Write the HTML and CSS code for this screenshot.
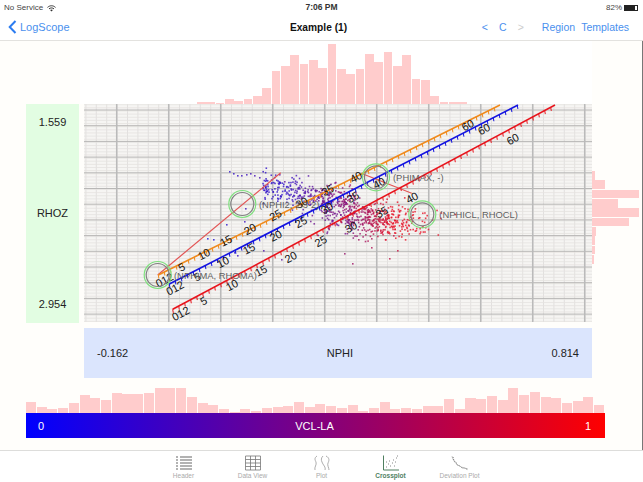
FILE: index.html
```html
<!DOCTYPE html>
<html lang="en">
<head>
  <meta charset="UTF-8" />
  <title>LogScope Crossplot</title>
  <link rel="stylesheet" href="styles.css">
</head>
<body>
  <div class="app">
    <div class="status-bar">
      <div class="status-left">No Service
        <svg class="wifi" width="9" height="7" viewBox="0 0 9 7"><path d="M0.5 2.4C3 0.2 6 0.2 8.5 2.4M2 3.9C3.6 2.6 5.4 2.6 7 3.9" fill="none" stroke="#333" stroke-width="1"/><path d="M4.5 6.6L3.1 5.1C4 4.4 5 4.4 5.9 5.1Z" fill="#333"/></svg>
      </div>
      <div class="status-time">7:06 PM</div>
      <div class="status-right">82%
        <span class="battery"><span class="battery-level"></span></span>
      </div>
    </div>

    <div class="nav-bar">
      <div class="nav-left">
        <svg width="9" height="14" viewBox="0 0 9 14"><path d="M7.5 1L1.7 7L7.5 13" fill="none" stroke="#2c7cf0" stroke-width="2"/></svg>
        <span>LogScope</span>
      </div>
      <div class="nav-title">Example (1)</div>
      <div class="nav-right">
        <span class="nav-step">&lt;</span>
        <span class="nav-step">C</span>
        <span class="nav-step off">&gt;</span>
        <span class="nav-link">Region</span>
        <span class="nav-link">Templates</span>
      </div>
    </div>

    <div class="main">
      <div class="top-hist" id="topHist"></div>

      <div class="plot-row">
        <div class="y-axis">
          <span>1.559</span>
          <span>RHOZ</span>
          <span>2.954</span>
        </div>
        <svg class="plot" id="plot" width="508" height="218" viewBox="84 104 508 218"></svg>
        <div class="right-hist" id="rightHist"></div>
      </div>

      <div class="x-axis">
        <span>-0.162</span>
        <span>NPHI</span>
        <span>0.814</span>
      </div>

      <div class="bottom-hist" id="bottomHist"></div>
      <div class="color-bar">
        <span>0</span>
        <span>VCL-LA</span>
        <span>1</span>
      </div>
    </div>

    <div class="tab-bar">
      <div class="tab">
        <svg width="18" height="16" viewBox="0 0 18 16">
          <path d="M1 2H3M5 2H17M1 5H3M5 5H17M1 8H3M5 8H17M1 11H3M5 11H17M1 14H3M5 14H17" stroke="#666" stroke-width="1.2"/>
        </svg>
        <span>Header</span>
      </div>
      <div class="tab">
        <svg width="18" height="16" viewBox="0 0 18 16">
          <path d="M1.5 1H16.5V15H1.5ZM1.5 4.5H16.5M1.5 8H16.5M1.5 11.5H16.5M6.5 1V15M11.5 1V15" fill="none" stroke="#777" stroke-width="0.8"/>
        </svg>
        <span>Data View</span>
      </div>
      <div class="tab">
        <svg width="18" height="16" viewBox="0 0 18 16">
          <path d="M4 1C1 3 2 5 3 7C4 10 1 12 2 15M10 1C8 3 8 5 9 7C10 10 13 12 12 15M13 1C17 3 16 6 15 8C14 10 16 13 16 15" fill="none" stroke="#999" stroke-width="0.8"/>
        </svg>
        <span>Plot</span>
      </div>
      <div class="tab active">
        <svg width="18" height="16" viewBox="0 0 18 16">
          <path d="M1.5 0.5V15H17" fill="none" stroke="#4f7f5f" stroke-width="1"/>
          <path d="M4 12h1M6 9h1M8 11h1M7 6h1M10 8h1M11 5h1M13 7h1M14 3h1M15 1h1M12 11h1M4 7h1" stroke="#888" stroke-width="1"/>
        </svg>
        <span>Crossplot</span>
      </div>
      <div class="tab">
        <svg width="18" height="16" viewBox="0 0 18 16">
          <path d="M1 1C2 7 7 12 17 14" fill="none" stroke="#bbb" stroke-width="0.8"/>
          <path d="M2 2L3 6L5 7L6 10L9 11L11 13L14 13L17 15" fill="none" stroke="#777" stroke-width="1" stroke-dasharray="1 1"/>
        </svg>
        <span>Deviation Plot</span>
      </div>
    </div>
  </div>

  <script src="main.js"></script>
</body>
</html>
```

FILE: styles.css
```css
* {
  box-sizing: border-box;
}
body {
  margin: 0;
  font-family: "Liberation Sans", Arial, sans-serif;
  background-color: #fffefb;
  color: #222;
}
.app {
  width: 643px;
  height: 482px;
  display: flex;
  flex-direction: column;
  overflow: hidden;
}
.status-bar {
  height: 14px;
  padding: 2px 4px 0;
  display: grid;
  grid-template-columns: 1fr auto 1fr;
  font-size: 8px;
  line-height: 10px;
  background-color: #fff;
  color: #444;
}
.status-left {
  display: flex;
  align-items: center;
  gap: 4px;
}
.status-time {
  font-size: 8.5px;
  font-weight: bold;
  color: #333;
}
.status-right {
  display: flex;
  justify-content: flex-end;
  align-items: center;
  gap: 2px;
  padding-right: 1px;
}
.battery {
  width: 14px;
  height: 6px;
  border: 1px solid #222;
  display: block;
}
.battery-level {
  display: block;
  width: 10px;
  height: 4px;
  background-color: #222;
}
.nav-bar {
  height: 27px;
  padding: 0 14px 0 8px;
  display: grid;
  grid-template-columns: 1fr auto 1fr;
  align-items: center;
  background-color: #fff;
  border-bottom: 1px solid #e3e2df;
  font-size: 10.5px;
}
.nav-left {
  display: flex;
  align-items: center;
  gap: 3px;
  font-size: 11px;
  color: #4a90ee;
}
.nav-title {
  font-size: 10.2px;
  font-weight: bold;
  color: #111;
}
.nav-right {
  display: flex;
  justify-content: flex-end;
  color: #4a90ee;
}
.nav-step {
  width: 18px;
  text-align: center;
}
.nav-step.off {
  color: #ccc;
  margin-right: 6px;
}
.nav-link {
  margin-left: 6px;
}
.main {
  flex: 1;
  position: relative;
  border-right: 1px solid #777;
}
.top-hist {
  height: 63px;
  margin-left: 80px;
  width: 512px;
  padding: 0 0 0 117px;
  display: flex;
  align-items: flex-end;
  background-color: #fff;
}
.top-hist .bar {
  width: 9.33px;
  padding-right: 0.7px;
  background-clip: content-box;
  background-color: #ffcccc;
}
.plot-row {
  height: 219px;
  padding-left: 26px;
  display: flex;
}
.y-axis {
  width: 53px;
  margin-right: 5px;
  padding: 12px 0 13px;
  display: flex;
  flex-direction: column;
  justify-content: space-between;
  align-items: center;
  background-color: #e2fde2;
  font-size: 11px;
}
.plot {
  display: block;
  background-color: #f6f5f3;
}
.right-hist {
  padding-top: 67px;
  flex: 1;
}
.right-hist .bar {
  height: 9.33px;
  padding-bottom: 0.7px;
  background-clip: content-box;
  background-color: #ffcccc;
}
.x-axis {
  height: 50px;
  margin: 5px 0 0 84px;
  width: 508px;
  padding: 0 13px;
  display: flex;
  justify-content: space-between;
  align-items: center;
  background-color: #dbe5fd;
  font-size: 11px;
}
.bottom-hist {
  height: 28px;
  margin: 7px 0 0 26px;
  width: 579px;
  display: flex;
  align-items: flex-end;
}
.bottom-hist .bar {
  flex: 1;
  padding-right: 0.7px;
  background-clip: content-box;
  background-color: #ffcccc;
}
.color-bar {
  height: 25px;
  margin-left: 26px;
  width: 579px;
  padding: 0 14px 0 12px;
  display: flex;
  justify-content: space-between;
  align-items: center;
  background: linear-gradient(to right, #0000ff, #ff0000);
  color: #fff;
  font-size: 11px;
}
.tab-bar {
  height: 32px;
  display: flex;
  justify-content: center;
  background-color: #fff;
  border-top: 1px solid #dddddb;
}
.tab {
  width: 69px;
  padding-top: 4px;
  display: flex;
  flex-direction: column;
  align-items: center;
  gap: 1px;
  font-size: 6.5px;
  line-height: 8px;
  color: #aaa;
}
.tab svg {
  display: block;
}
.tab.active {
  color: #4f7f5f;
  font-weight: bold;
}
```

FILE: main.js
```js
const SVG_NS = 'http://www.w3.org/2000/svg';
const plot = document.getElementById('plot');

// histogram heights read off the chart, left to right
const topBars = [2, 2, 1.3, 5.3, 3.3, 4.7, 8, 16, 33, 38.3, 48.7, 40.3, 43.7, 35.7, 60.3, 35.3, 29.7, 35.3, 50, 42, 52.3, 38.3, 48.7, 25.3, 23.7, 8.3, 2, 2, 2];
const bottomBars = [11, 6, 3.7, 5.3, 9.7, 18, 15, 12.7, 19.7, 18.7, 18.7, 20, 25.3, 25.3, 25.3, 15.7, 9.7, 7.7, 4, 1.3, 4, 2.3, 5, 5.7, 7, 11, 6, 9.3, 7.3, 5.3, 7.7, 2.3, 5.3, 10.7, 3.7, 5.3, 4, 7, 7, 14, 4, 14.7, 14, 16.7, 13, 25.3, 18, 20.7, 15.7, 14.7, 9.7, 11.7, 15.7, 8];
const rightBars = [2.7, 13.3, 47, 25.7, 46.7, 37, 3.7, 2.7, 2.7, 1.7];

function addBars(id, values, prop) {
  const box = document.getElementById(id);
  values.forEach(v => {
    const bar = document.createElement('div');
    bar.className = 'bar';
    bar.style[prop] = v + 'px';
    box.appendChild(bar);
  });
}
addBars('topHist', topBars, 'height');
addBars('bottomHist', bottomBars, 'height');
addBars('rightHist', rightBars, 'width');

function el(name, attrs, text) {
  const node = document.createElementNS(SVG_NS, name);
  for (const key in attrs) {
    node.setAttribute(key, attrs[key]);
  }
  if (text) node.textContent = text;
  plot.appendChild(node);
  return node;
}

function line(x1, y1, x2, y2, stroke, width) {
  el('line', { x1, y1, x2, y2, stroke, 'stroke-width': width });
}

// grid: minor lines first so the major ones sit on top
for (let i = 0; i < 50; i++) {
  const x = 85 + i * 10.4 + 0.9;
  if (x < 592) line(x, 104, x, 322, '#dddbd9', 0.8);
}
for (let i = 0; i < 70; i++) {
  const y = 104.7 + i * 3.14;
  if (y < 322) line(84, y, 592, y, '#e4e2e0', 0.8);
}
for (let i = 0; i < 14; i++) {
  const y = 110 + i * 15.7;
  line(84, y, 592, y, '#b8b7b6', 1);
}
for (let i = 0; i < 10; i++) {
  const x = 116.7 + i * 52;
  line(x, 104, x, 322, '#bababa', 1.5);
}

// scatter cloud, blue on the upper left going to red on the lower right
let seed = 7;
function rnd() {
  seed = (seed * 16807) % 2147483647;
  return seed / 2147483647;
}
function gauss() {
  return (rnd() + rnd() + rnd() + rnd() - 2) / 0.58;
}
function dotColor(t) {
  const r = Math.round(50 + 180 * t);
  const b = Math.round(200 - 160 * t);
  return `rgb(${r},20,${b})`;
}
function dot(x, y, t) {
  el('rect', { x, y, width: 1.6, height: 1.6, fill: dotColor(t), opacity: 0.8 });
}
for (let i = 0; i < 340; i++) {
  const x = 262 + rnd() * 95;
  const y = 186 + (x - 262) * 0.18 + gauss() * 7;
  dot(x, y, Math.min(1, Math.max(0, (x - 285) / 110)));
}
for (let i = 0; i < 420; i++) {
  const x = 375 + gauss() * 28;
  const y = 219 + (x - 375) * 0.05 + gauss() * 8.5;
  dot(x, y, Math.min(1, Math.max(0.35, (x - 315) / 75)));
}
const stray = [[229, 171], [233, 173], [237, 175], [241, 175], [246, 174], [250, 173], [254, 175], [259, 177],
  [245, 208], [213, 239], [207, 238], [226, 224], [234, 252], [237, 255], [263, 250], [281, 259], [244, 221],
  [284, 181], [279, 174], [344, 253], [352, 263], [371, 247], [389, 258], [397, 250], [358, 239], [371, 238], [393, 235]];
stray.forEach(p => dot(p[0], p[1], (p[0] - 230) / 200));

// the three sandstone / limestone / dolomite lines
const rails = [
  {
    color: '#f08a1c', x0: 158.3, y0: 275, x1: 500, y1: 105,
    labels: [[5, 181.7, 267], [10, 204, 254], [15, 226, 240.7], [20, 250, 229], [25, 275.5, 215], [30, 301.7, 202.7], [35, 327.7, 190], [40, 356, 177], [60, 467.7, 125]],
    zero: [164.5, 280]
  },
  {
    color: '#1414e0', x0: 169.3, y0: 284, x1: 518, y1: 105,
    labels: [[5, 197, 276.7], [10, 223, 262], [15, 249, 248.7], [20, 275.7, 235.7], [25, 301, 222], [30, 327, 208], [35, 353, 197], [40, 379, 183], [60, 484, 129]],
    zero: [175, 288]
  },
  {
    color: '#e8141c', x0: 172.7, y0: 309.3, x1: 555, y1: 105,
    labels: [[5, 203.7, 300.7], [10, 232, 285], [15, 261, 270.7], [20, 290.7, 257], [25, 320.7, 241], [30, 351, 227], [35, 381.7, 212], [40, 412, 197.7], [60, 512.7, 139]],
    zero: [180.7, 313.5]
  }
];

// straight red construction lines go under the rails
line(157.7, 275, 280.7, 172.7, '#e25555', 1.2);
line(363, 174, 411.7, 193.3, '#e25555', 1.2);

rails.forEach(rail => {
  const slope = (rail.y1 - rail.y0) / (rail.x1 - rail.x0);
  line(rail.x0, rail.y0, rail.x1, rail.y1, rail.color, 1.6);
  for (let x = rail.x0; x <= rail.x1; x += 6) {
    const y = rail.y0 + (x - rail.x0) * slope;
    line(x, y, x + 0.6, y + 3.6, rail.color, 1);
  }
  const labels = rail.labels.concat([['012', rail.zero[0], rail.zero[1]]]);
  labels.forEach(l => {
    el('text', {
      x: l[1], y: l[2],
      'text-anchor': 'middle', 'dominant-baseline': 'central',
      'font-family': '"Liberation Sans", Arial, sans-serif', 'font-size': 11, fill: '#111',
      transform: `rotate(-28 ${l[1]} ${l[2]})`
    }, String(l[0]));
  });
});

// picked points with their names
const picks = [
  { x: 157.7, y: 275, name: '(NPHIMA, RHOMA)', tx: 174, ty: 275 },
  { x: 242.3, y: 204, name: '(NPHI2, 2.3-2)', tx: 259, ty: 204 },
  { x: 376, y: 177.3, name: '(PHIMAX, -)', tx: 393, ty: 177 },
  { x: 422.3, y: 214.3, name: '(NPHICL, RHOCL)', tx: 439.3, ty: 214 }
];
picks.forEach(p => {
  el('circle', { cx: p.x, cy: p.y, r: 13.5, fill: 'none', stroke: '#7fe07f', 'stroke-width': 1.2 });
  el('circle', { cx: p.x, cy: p.y, r: 11.5, fill: 'none', stroke: '#808080', 'stroke-width': 1.2 });
  el('text', {
    x: p.tx, y: p.ty, 'dominant-baseline': 'central',
    'font-family': '"Liberation Sans", Arial, sans-serif', 'font-size': 9.4, fill: '#5f5f5f'
  }, p.name);
});
```
